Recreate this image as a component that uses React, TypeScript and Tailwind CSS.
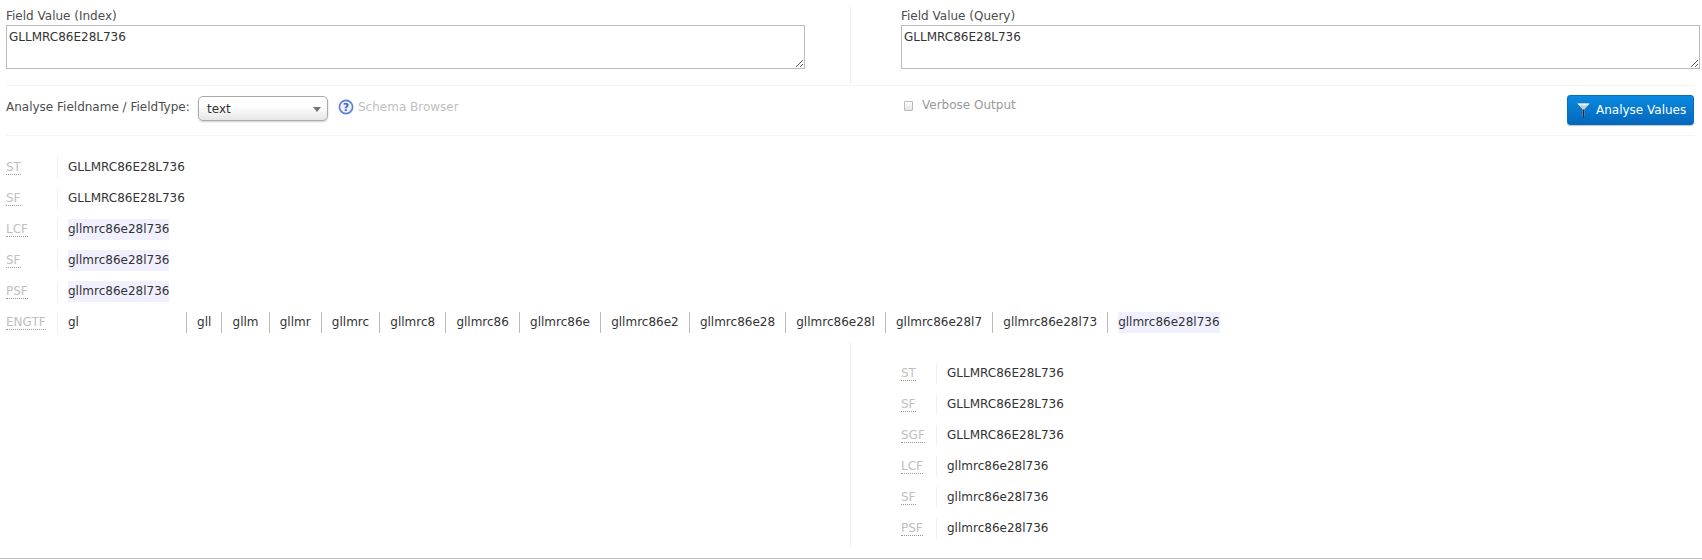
const Abbr = ({ children }: { children: string }) => (
  <span className="border-b border-dotted border-[#999] leading-[14px]">{children}</span>
);

const Row = ({ label, value, hl, narrow }: { label: string; value: string; hl?: boolean; narrow?: boolean }) => (
  <div className="flex h-[21px] items-stretch">
    <div className={`${narrow ? "w-[35px]" : "w-[51px]"} flex shrink-0 items-center text-[#c0c0c0]`}>
      <Abbr>{label}</Abbr>
    </div>
    <div className="border-l border-[#f0f0f0] pl-[10px]">
      <div className={`h-[21px] leading-[20px] whitespace-nowrap ${hl ? "w-[101px] overflow-hidden bg-[#f0f0ff]" : ""}`}>
        {value}
      </div>
    </div>
  </div>
);

const tokens = [
  "gll",
  "gllm",
  "gllmr",
  "gllmrc",
  "gllmrc8",
  "gllmrc86",
  "gllmrc86e",
  "gllmrc86e2",
  "gllmrc86e28",
  "gllmrc86e28l",
  "gllmrc86e28l7",
  "gllmrc86e28l73",
];

const App = () => {
  return (
    <div className="h-[560px] w-[1702px] overflow-hidden bg-white font-['DejaVu_Sans','Liberation_Sans',sans-serif] text-[12px] text-[#333]">
      <div className="h-[559px] border-b border-[#bbb]">
        {/* field values */}
        <div className="flex h-[85px] pt-[6px]">
          <div className="w-[851px] shrink-0 border-r border-[#f0f0f0] pl-[6px]">
            <label className="block h-[19px] pt-[1px] leading-[18px] text-[#4d4d4d]">Field Value (Index)</label>
            <textarea
              readOnly
              defaultValue="GLLMRC86E28L736"
              className="block h-[44px] w-[799px] border border-[#bbb] bg-white px-[2px] py-[2px] text-[#333] outline-none"
            />
          </div>
          <div className="pl-[50px]">
            <label className="block h-[19px] pt-[1px] leading-[18px] text-[#4d4d4d]">Field Value (Query)</label>
            <textarea
              readOnly
              defaultValue="GLLMRC86E28L736"
              className="block h-[44px] w-[799px] border border-[#bbb] bg-white px-[2px] py-[2px] text-[#333] outline-none"
            />
          </div>
        </div>

        {/* options */}
        <div className="mx-[6px] flex h-[51px] w-[1689px] border-t border-b border-[#f4f4f4]">
          <div className="flex w-[895px] shrink-0 items-start pt-[10px]">
            <span className="w-[187px] shrink-0 leading-[22px] text-[#4d4d4d]">Analyse Fieldname / FieldType:</span>
            <div className="ml-[5px] flex h-[25px] w-[130px] items-center justify-between rounded-[5px] border border-[#aaa] bg-gradient-to-b from-white from-40% to-[#e6e6e6] pr-[6px] pl-[8px] shadow-[0_1px_2px_rgba(0,0,0,0.2)]">
              <span>text</span>
              <span className="mt-[2px] h-0 w-0 border-x-[4px] border-t-[5px] border-x-transparent border-t-[#777]" />
            </div>
            <svg viewBox="0 0 16 16" className="mt-[3px] ml-[10px] h-[16px] w-[16px]">
              <circle cx="8" cy="8" r="6.6" fill="#eef1fb" stroke="#5b7fd6" strokeWidth="1.6" />
              <text x="8" y="11.8" textAnchor="middle" fontSize="10.5" fontWeight="700" fill="#3a5fc0" fontFamily="DejaVu Sans">?</text>
            </svg>
            <span className="ml-[4px] leading-[22px] text-[#c0c0c0]">Schema Browser</span>
          </div>
          <div className="flex items-start pt-[3px]">
            <div className="mt-[12px] ml-[3px] h-[10px] w-[9px] rounded-[1px] border border-[#bbb] bg-gradient-to-b from-white to-[#e4e4e4]" />
            <span className="mt-[5px] ml-[9px] leading-[22px] text-[#999]">Verbose Output</span>
          </div>
          <div className="ml-auto pt-[9px] pr-[1px]">
            <button className="flex h-[30px] w-[127px] items-center rounded-[3px] border border-[#0a6cc0] bg-gradient-to-b from-[#0a8ae0] to-[#0468bd] pl-[9px] font-['DejaVu_Sans',sans-serif] text-[12px] text-white shadow-[0_1px_1px_rgba(0,0,0,0.25)]">
              <svg viewBox="0 0 14 16" className="h-[16px] w-[13px]">
                <path d="M0.5 1h13L8 7.5V15H6V7.5z" fill="#c3ced6" />
                <path d="M0.5 1h13l-1.6 2H2.1z" fill="#eef3f6" />
                <path d="M6.2 7.5h1.6V16H6.2z" fill="#1c2a38" />
              </svg>
              <span className="ml-[6px]">Analyse Values</span>
            </button>
          </div>
        </div>

        {/* index analysis */}
        <div className="flex flex-col gap-[10px] pt-[21px] pl-[6px]">
          <Row label="ST" value="GLLMRC86E28L736" />
          <Row label="SF" value="GLLMRC86E28L736" />
          <Row label="LCF" value="gllmrc86e28l736" hl />
          <Row label="SF" value="gllmrc86e28l736" hl />
          <Row label="PSF" value="gllmrc86e28l736" hl />
          <div className="flex h-[21px] items-stretch">
            <div className="flex w-[51px] shrink-0 items-center text-[#c0c0c0]">
              <Abbr>ENGTF</Abbr>
            </div>
            <div className="w-[129px] shrink-0 border-l border-[#f0f0f0] pl-[10px] leading-[20px]">gl</div>
            {tokens.map((token) => (
              <div key={token} className="border-l border-[#bbb] px-[10.1px] leading-[20px] whitespace-nowrap">
                {token}
              </div>
            ))}
            <div className="border-l border-[#bbb] pl-[10px]">
              <div className="h-[21px] bg-[#f0f0ff] leading-[20px]">gllmrc86e28l736</div>
            </div>
          </div>
        </div>

        {/* query analysis */}
        <div className="mt-[9px] ml-[850px] flex h-[206px] flex-col gap-[10px] border-l border-[#f0f0f0] pt-[21px] pl-[50px]">
          <Row label="ST" value="GLLMRC86E28L736" narrow />
          <Row label="SF" value="GLLMRC86E28L736" narrow />
          <Row label="SGF" value="GLLMRC86E28L736" narrow />
          <Row label="LCF" value="gllmrc86e28l736" narrow />
          <Row label="SF" value="gllmrc86e28l736" narrow />
          <Row label="PSF" value="gllmrc86e28l736" narrow />
        </div>
      </div>
    </div>
  );
};

export default App;
